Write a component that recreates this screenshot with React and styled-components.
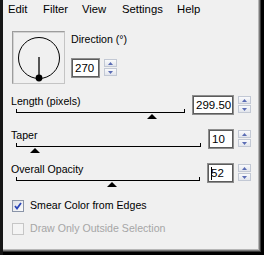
import React from "react";
import styled, { createGlobalStyle } from "styled-components";

const GlobalStyle = createGlobalStyle`
  html, body {
    margin: 0;
    padding: 0;
    background: #f0f0f0;
  }
  body {
    font-family: "Liberation Sans", Arial, sans-serif;
  }
`;

const Frame = styled.div`
  width: 264px;
  height: 255px;
  box-sizing: border-box;
  background: #f0f0f0;
  color: #000;
  display: flex;
  flex-direction: column;
  overflow: hidden;
  box-shadow: inset 3px 0 0 #161616, inset -3px -3px 0 #000,
    inset -4px -4px 0 #3a3a3a, inset -5px -5px 0 #7a7a7a,
    inset -6px -6px 0 #b6b6b6;
`;

const MenuBar = styled.div`
  display: flex;
  height: 14px;
  margin-top: 2px;
  padding-left: 8px;
  font-size: 11.3px;
  line-height: 14px;
`;

const MenuItem = styled.span`
  width: ${(p) => p.$w}px;
  flex: none;
`;

const DirectionRow = styled.div`
  display: flex;
  gap: 6px;
  margin-top: 15px;
  padding-left: 12px;
`;

const DialBox = styled.div`
  width: 53px;
  height: 53px;
  box-sizing: border-box;
  border-top: 1px solid #9c9c9c;
  border-left: 1px solid #9c9c9c;
  border-right: 1px solid #c4c4c4;
  border-bottom: 1px solid #c4c4c4;
  box-shadow: inset 1px 1px 0 #d2d2d2;
  display: flex;
`;

const DirColumn = styled.div`
  display: flex;
  flex-direction: column;
  padding-top: 2px;
`;

const Label = styled.div`
  font-size: 10.6px;
  line-height: 13px;
  white-space: nowrap;
`;

const InputRow = styled.div`
  display: flex;
  align-items: flex-start;
  margin-top: ${(p) => p.$top || 0}px;
  margin-left: ${(p) => p.$left || 0}px;
`;

const NumberBox = styled.div`
  width: ${(p) => p.$w}px;
  height: 20px;
  box-sizing: border-box;
  background: #fff;
  border: 1px solid #8e8e8e;
  box-shadow: inset 1px 1px 0 #5c5c5c, inset -1px -1px 0 #5c5c5c;
  font-size: 11.5px;
  line-height: 18px;
  padding-left: 3px;
  display: flex;
  align-items: center;
`;

const Caret = styled.span`
  width: 1px;
  height: 13px;
  background: #000;
  margin-right: -1px;
`;

const Spinner = styled.div`
  width: 13px;
  height: 17px;
  margin-left: 4px;
  margin-top: 1px;
  display: flex;
  flex-direction: column;
  gap: 1px;
`;

const SpinButton = styled.div`
  flex: 1;
  box-sizing: border-box;
  border: 1px solid #c2c8d4;
  background: linear-gradient(#f9fafc, #e2e5ec);
  display: flex;
  align-items: center;
  justify-content: center;
`;

const SliderBlock = styled.div`
  display: flex;
  height: 34px;
  padding-left: 11px;
  margin-top: ${(p) => p.$top || 0}px;
`;

const SliderColumn = styled.div`
  width: ${(p) => p.$w}px;
  display: flex;
  flex-direction: column;
  flex: none;
`;

const Track = styled.div`
  position: relative;
  height: 21px;
  margin-left: 5px;
`;

const TrackLine = styled.div`
  height: 4px;
  margin-top: 1px;
  box-sizing: border-box;
  border-left: 1px solid #000;
  border-right: 1px solid #000;
  border-bottom: 1px solid #000;
`;

const Thumb = styled.div`
  position: absolute;
  top: 6px;
  width: 0;
  height: 0;
  transform: translateX(-50%);
  border-left: 5px solid transparent;
  border-right: 5px solid transparent;
  border-bottom: 5px solid #000;
`;

const CheckRow = styled.div`
  display: flex;
  align-items: center;
  gap: 6px;
  height: 13px;
  padding-left: 12px;
  margin-top: ${(p) => p.$top}px;
  color: ${(p) => (p.$disabled ? "#a6a6a6" : "#000")};
`;

const CheckBox = styled.div`
  width: 12px;
  height: 12px;
  box-sizing: border-box;
  border: 1px solid ${(p) => (p.$disabled ? "#c6c6c6" : "#8a94a8")};
  background: ${(p) =>
    p.$disabled
      ? "#f4f4f4"
      : "linear-gradient(135deg, #dcdfe6, #fbfbfb)"};
  display: flex;
  align-items: center;
  justify-content: center;
`;

function Arrow({ up }) {
  return (
    <svg width="5" height="3" viewBox="0 0 5 3">
      <path d={up ? "M2.5 0 L5 3 L0 3 Z" : "M0 0 L5 0 L2.5 3 Z"} fill="#5a6cb4" />
    </svg>
  );
}

function Spin() {
  return (
    <Spinner>
      <SpinButton>
        <Arrow up />
      </SpinButton>
      <SpinButton>
        <Arrow />
      </SpinButton>
    </Spinner>
  );
}

function Dial() {
  return (
    <DialBox>
      <svg width="51" height="51" viewBox="0 0 51 51">
        <circle cx="26" cy="26" r="20.5" fill="none" stroke="#000" strokeWidth="1" />
        <line x1="26" y1="25" x2="26" y2="46" stroke="#555" strokeWidth="2" />
        <circle cx="26" cy="46" r="3.4" fill="#000" />
      </svg>
    </DialBox>
  );
}

function Slider({ label, value, pct, colW, inputW, top, caret }) {
  return (
    <SliderBlock $top={top}>
      <SliderColumn $w={colW}>
        <Label>{label}</Label>
        <Track>
          <TrackLine />
          <Thumb style={{ left: `${pct}%` }} />
        </Track>
      </SliderColumn>
      <InputRow $left={7}>
        <NumberBox $w={inputW}>
          {caret && <Caret />}
          {value}
        </NumberBox>
        <Spin />
      </InputRow>
    </SliderBlock>
  );
}

export default function App() {
  return (
    <>
      <GlobalStyle />
      <Frame>
        <MenuBar>
          <MenuItem $w={35}>Edit</MenuItem>
          <MenuItem $w={39}>Filter</MenuItem>
          <MenuItem $w={40}>View</MenuItem>
          <MenuItem $w={55}>Settings</MenuItem>
          <MenuItem $w={30}>Help</MenuItem>
        </MenuBar>

        <DirectionRow>
          <Dial />
          <DirColumn>
            <Label>Direction (°)</Label>
            <InputRow $top={12}>
              <NumberBox $w={29}>270</NumberBox>
              <Spin />
            </InputRow>
          </DirColumn>
        </DirectionRow>

        <Slider label="Length (pixels)" value="299.50" pct={80.5} colW={174} inputW={42} top={11} />
        <Slider label="Taper" value="10" pct={10} colW={190} inputW={26} />
        <Slider label="Overall Opacity" value="52" pct={52} colW={189} inputW={27} caret />

        <CheckRow $top={2}>
          <CheckBox>
            <svg width="8" height="8" viewBox="0 0 8 8">
              <path d="M1 4 L3 6.5 L7 1" fill="none" stroke="#2a45b8" strokeWidth="1.8" />
            </svg>
          </CheckBox>
          <Label>Smear Color from Edges</Label>
        </CheckRow>
        <CheckRow $top={10} $disabled>
          <CheckBox $disabled />
          <Label>Draw Only Outside Selection</Label>
        </CheckRow>
      </Frame>
    </>
  );
}
